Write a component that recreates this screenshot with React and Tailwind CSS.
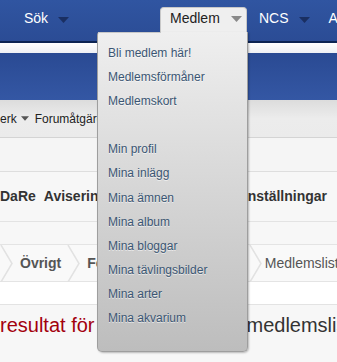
import React from "react";

const menuItems = [
  "Bli medlem här!",
  "Medlemsförmåner",
  "Medlemskort",
  "",
  "Min profil",
  "Mina inlägg",
  "Mina ämnen",
  "Mina album",
  "Mina bloggar",
  "Mina tävlingsbilder",
  "Mina arter",
  "Mina akvarium",
];

function Caret({ className }) {
  return (
    <svg width="11" height="6" viewBox="0 0 11 6" className={className}>
      <path d="M0 0 L11 0 L5.5 6 Z" fill="currentColor" />
    </svg>
  );
}

function Chevron() {
  return (
    <svg width="14" height="37" viewBox="0 0 14 37" className="shrink-0">
      <path d="M1 0 L12 18.5 L1 37" fill="none" stroke="#e2e2e2" strokeWidth="1.5" />
    </svg>
  );
}

export default function App() {
  return (
    <div
      className="relative w-[337px] h-[362px] overflow-hidden bg-[#f7f7f7]"
      style={{ fontFamily: '"Liberation Sans", Arial, sans-serif' }}
    >
      {/* top nav */}
      <div className="h-[41px] flex items-start bg-gradient-to-b from-[#3055a1] to-[#2b4c95] text-white text-[14px] whitespace-nowrap overflow-hidden">
        <div className="w-[160px] shrink-0 flex items-center pl-[24px] pt-[10px] leading-[16px]">
          <span>Sök</span>
          <Caret className="ml-[10px] mt-[3px] text-[#1a2f62]" />
        </div>
        <div className="w-[87px] shrink-0 h-[34px] mt-[7px] bg-[#efefef] rounded-t-[4px] border border-b-0 border-[#c8c8c8] flex items-start pl-[9px] pt-[2px] text-[#222] leading-[16px]">
          <span>Medlem</span>
          <Caret className="ml-[11px] mt-[6px] text-[#8a8a8a]" />
        </div>
        <div className="flex shrink-0 items-center ml-[12px] pt-[10px] leading-[16px]">
          <span>NCS</span>
          <Caret className="ml-[10px] mt-[3px] text-[#1a2f62]" />
          <span className="ml-[19px]">Admin</span>
        </div>
      </div>
      <div className="h-[2px] bg-[#0d2453]" />
      <div className="h-[10px] bg-gradient-to-b from-white to-[#eef0f4]" />
      <div className="h-[47px] bg-gradient-to-b from-[#2a4a93] to-[#3457a4]" />

      {/* sub nav */}
      <div className="h-[38px] bg-gradient-to-b from-[#dcdcdc] via-[#ececec] to-[#ebebeb] border-b border-[#d4d4d4] flex items-center text-[12px] text-[#222] whitespace-nowrap">
        <span>erk</span>
        <Caret className="ml-[4px] w-[8px] h-[5px] text-[#555]" />
        <span className="ml-[6px]">Forumåtgärder</span>
      </div>
      <div className="h-[34px] bg-[#f5f5f5] border-b border-[#dedede]" />

      {/* tabs row */}
      <div className="h-[50px] bg-[#f7f7f7] border-b border-[#e3e3e3] flex items-center justify-between pr-[10px] text-[14px] font-bold text-[#333] whitespace-nowrap">
        <div className="flex gap-[8px]">
          <span>DaRe</span>
          <span>Aviseringar</span>
        </div>
        <span>Inställningar</span>
      </div>

      {/* breadcrumb */}
      <div className="h-[22px]" />
      <div className="h-[38px] bg-[#f9f9f9] border-y border-[#e4e4e4] flex items-center text-[14px] text-[#555] whitespace-nowrap">
        <Chevron />
        <span className="ml-[6px] font-bold">Övrigt</span>
        <span className="ml-[6px]"><Chevron /></span>
        <span className="ml-[6px] font-bold">Forum</span>
        <span className="ml-[118px]"><Chevron /></span>
        <span className="ml-[2px]">Medlemslista</span>
      </div>
      <div className="h-[23px] bg-white border-b border-[#e3e3e3]" />

      {/* heading */}
      <div className="pt-[8px] flex text-[20px] leading-[24px] whitespace-nowrap">
        <span className="text-[#a3000d]">resultat för</span>
        <span className="ml-[152px] text-[#333]">medlemslista</span>
      </div>

      {/* dropdown */}
      <div className="absolute left-[97px] top-[32px] w-[151px] h-[320px] rounded-b-[5px] rounded-tl-[3px] border border-t-0 border-[#9e9e9e] bg-gradient-to-b from-[#efefef] to-[#bdbdbd] shadow-[1px_1px_2px_rgba(0,0,0,0.25)] pt-[9px] pl-[10px]">
        <div className="absolute top-0 left-0 w-[63px] h-px bg-[#c8c8c8]" />
        {menuItems.map((item, i) => (
          <div
            key={i}
            className="h-[24.1px] leading-[24px] text-[12px] text-[#3b5673] [text-shadow:0_1px_0_rgba(255,255,255,0.6)]"
          >
            {item}
          </div>
        ))}
      </div>
    </div>
  );
}
